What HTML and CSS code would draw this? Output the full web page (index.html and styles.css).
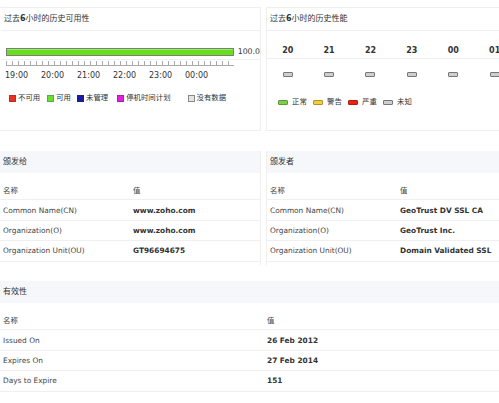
FILE: index.html
```html
<!DOCTYPE html>
<html>
<head>
<meta charset="utf-8">
<link rel="stylesheet" href="styles.css">
</head>
<body>
<div class="top">
  <div class="panel avail">
    <div class="phead">过去<b>6</b>小时的历史可用性</div>
    <div class="barrow">
      <div class="bar"><div class="fill" style="width:100%"></div></div>
      <span class="pct">100.0</span>
    </div>
    <div class="ruler"></div>
    <div class="times"><span>19:00</span><span>20:00</span><span>21:00</span><span>22:00</span><span>23:00</span><span>00:00</span></div>
    <div class="legend">
      <span class="li"><i class="sq red"></i>不可用</span>
      <span class="li"><i class="sq green"></i>可用</span>
      <span class="li"><i class="sq blue"></i>未管理</span>
      <span class="li"><i class="sq magenta"></i>停机时间计划</span>
      <span class="li last"><i class="sq grey"></i>没有数据</span>
    </div>
  </div>
  <div class="panel perf">
    <div class="phead">过去<b>6</b>小时的历史性能</div>
    <div class="hours"><span>20</span><span>21</span><span>22</span><span>23</span><span>00</span><span>01</span></div>
    <div class="boxes"><span><i class="pill"></i></span><span><i class="pill"></i></span><span><i class="pill"></i></span><span><i class="pill"></i></span><span><i class="pill"></i></span><span><i class="pill"></i></span></div>
    <div class="plegend">
      <span class="pli"><i class="pill ok"></i>正常</span>
      <span class="pli"><i class="pill warn"></i>警告</span>
      <span class="pli"><i class="pill crit"></i>严重</span>
      <span class="pli"><i class="pill"></i>未知</span>
    </div>
  </div>
</div>

<div class="mid">
  <div class="card left">
    <div class="chead">颁发给</div>
    <div class="rows">
      <div class="row th"><span class="k">名称</span><span class="v">值</span></div>
      <div class="row"><span class="k">Common Name(CN)</span><span class="v b">www.zoho.com</span></div>
      <div class="row"><span class="k">Organization(O)</span><span class="v b">www.zoho.com</span></div>
      <div class="row"><span class="k">Organization Unit(OU)</span><span class="v b">GT96694675</span></div>
    </div>
  </div>
  <div class="card right">
    <div class="chead">颁发者</div>
    <div class="rows">
      <div class="row th"><span class="k">名称</span><span class="v">值</span></div>
      <div class="row"><span class="k">Common Name(CN)</span><span class="v b">GeoTrust DV SSL CA</span></div>
      <div class="row"><span class="k">Organization(O)</span><span class="v b">GeoTrust Inc.</span></div>
      <div class="row"><span class="k">Organization Unit(OU)</span><span class="v b">Domain Validated SSL</span></div>
    </div>
  </div>
</div>

<div class="card validity">
  <div class="chead">有效性</div>
  <div class="rows">
    <div class="row th"><span class="k">名称</span><span class="v">值</span></div>
    <div class="row"><span class="k">Issued On</span><span class="v b">26 Feb 2012</span></div>
    <div class="row"><span class="k">Expires On</span><span class="v b">27 Feb 2014</span></div>
    <div class="row"><span class="k">Days to Expire</span><span class="v b">151</span></div>
  </div>
</div>
</body>
</html>
```

FILE: styles.css
```css
html, body {
  margin: 0;
  padding: 0;
  background: #fff;
}
body {
  width: 499px;
  height: 403px;
  overflow: hidden;
  font-family: "DejaVu Sans", "Noto Sans CJK SC", sans-serif;
  font-size: 7.4px;
  color: #444;
}
i { display: inline-block; font-style: normal; }

/* top */
.top {
  display: flex;
  gap: 5px;
  margin-top: 7px;
  height: 124px;
}
.panel {
  border: 1px solid #efefef;
  box-sizing: border-box;
  height: 124px;
}
.avail { width: 261px; flex: none; border-left-color: #fff; }
.perf { flex: none; width: 240px; border-right: none; }
.phead {
  height: 22px;
  line-height: 22px;
  border-bottom: 1px solid #efefef;
  font-size: 8px;
  color: #333;
  padding-left: 3px;
}
.phead b { font-weight: bold; color: #333; }

.barrow {
  height: 29px;
  box-sizing: border-box;
  padding-top: 17px;
  padding-left: 5px;
  border-bottom: 1px solid #efefef;
  display: flex;
  align-items: flex-start;
}
.bar {
  width: 229px;
  height: 8px;
  box-sizing: border-box;
  border: 1px solid #7c7c7c;
  background: #ddd;
}
.fill {
  height: 100%;
  background: #68de1c;
  box-shadow: inset 0 1px 0 #8ef05a;
}
.pct {
  margin-left: 4px;
  font-size: 7.8px;
  line-height: 8px;
  color: #333;
}
.ruler {
  margin: 1px 0 0 5px;
  width: 228px;
  height: 4px;
  border-bottom: 1px solid #aaa;
  background: repeating-linear-gradient(to right, #aaa 0 1px, transparent 1px 6px);
}
.times {
  display: flex;
  margin: 5px 0 0 4px;
  line-height: 10px;
  font-size: 8px;
  color: #333;
}
.times span { width: 36px; flex: none; }
.legend {
  display: flex;
  margin: 12px 0 0 8px;
  line-height: 10px;
  color: #333;
}
.li { display: flex; align-items: center; margin-right: 7px; white-space: nowrap; }
.li:nth-child(2) { margin-right: 6px; }
.li:nth-child(3) { margin-right: 9px; }
.li:nth-child(4) { margin-right: 17px; }
.sq {
  width: 7px;
  height: 7px;
  box-sizing: border-box;
  border: 1px solid #666;
  margin-right: 2px;
}
.red { background: #e8321c; border-color: #a33; }
.green { background: #6cdc2a; border-color: #5a5; }
.blue { background: #1a1aa8; border-color: #226; }
.magenta { background: #e21ee0; border-color: #a2a; }
.grey { background: #e4e4e4; border-color: #888; }

.hours {
  display: flex;
  height: 28px;
  box-sizing: border-box;
  padding-top: 15px;
  line-height: 10px;
  border-bottom: 1px solid #efefef;
  font-weight: bold;
  font-size: 8px;
  color: #333;
}
.hours span, .boxes span {
  width: 41.4px;
  flex: none;
  text-align: center;
}
.boxes {
  display: flex;
  margin-top: 13px;
  height: 5px;
}
.pill {
  width: 10px;
  height: 5px;
  box-sizing: border-box;
  border: 1px solid #777;
  border-radius: 1px;
  background: #cfcfcf;
  vertical-align: top;
}
.plegend {
  display: flex;
  margin: 20px 0 0 11px;
  line-height: 10px;
  color: #333;
}
.pli {
  display: flex;
  align-items: center;
  width: 35px;
  flex: none;
  white-space: nowrap;
}
.pli .pill { margin-right: 4px; }
.ok { background: #7dcf48; border-color: #5a9a3a; }
.warn { background: #f2cd3e; border-color: #b09030; }
.crit { background: #f2200e; border-color: #b02010; }

/* cards */
.mid {
  display: flex;
  gap: 5px;
  margin-top: 20px;
}
.card {
  box-sizing: border-box;
}
.card.left { width: 261px; flex: none; border-right: 1px solid #efefef; height: 114px; }
.card.right { width: 240px; flex: none; border-left: 1px solid #efefef; height: 114px; }
.chead {
  height: 22px;
  line-height: 22px;
  background: #f6f7fb;
  font-size: 8px;
  color: #333;
  padding-left: 3px;
}
.rows { margin-top: 7px; }
.row {
  display: flex;
  height: 20.4px;
  box-sizing: border-box;
  border-bottom: 1px solid #f0f0f0;
  align-items: center;
  padding-left: 3px;
  white-space: nowrap;
}
.k { width: 130px; flex: none; color: #444; }
.v { color: #444; }
.v.b { font-weight: bold; color: #333; }

.validity { margin-top: 16px; width: 499px; }
.validity .k { width: 264px; }
```
